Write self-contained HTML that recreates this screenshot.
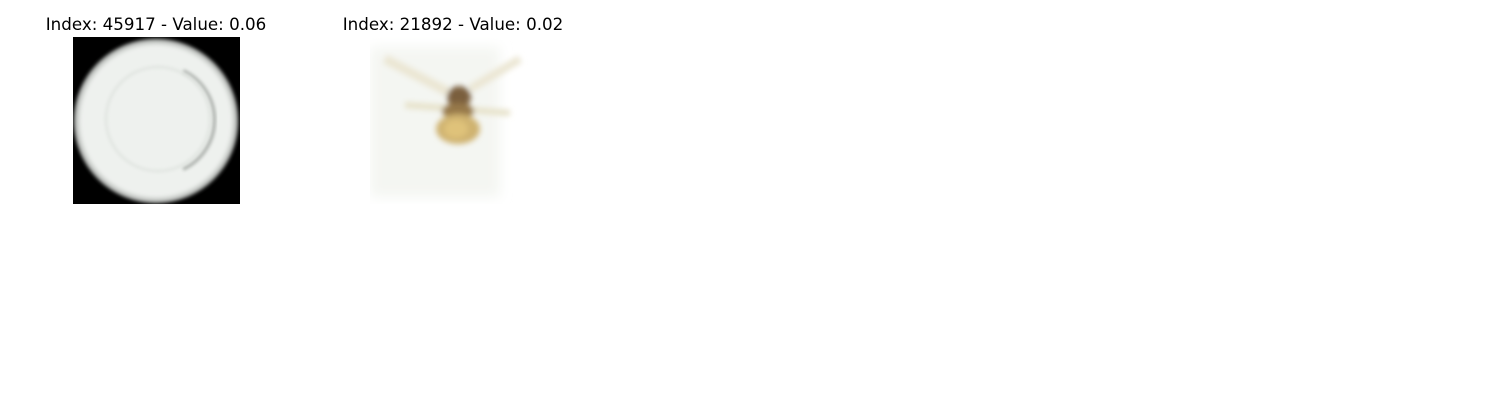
<!DOCTYPE html>
<html><head><meta charset="utf-8"><style>
html,body{margin:0;padding:0;background:#fff;width:1500px;height:400px;overflow:hidden}
.t{position:absolute;top:14px;font-family:"DejaVu Sans","Liberation Sans",sans-serif;font-size:16.7px;color:#000;white-space:nowrap;transform:translateX(-50%)}
svg{position:absolute}
</style></head><body>
<div class="t" style="left:156px">Index: 45917 - Value: 0.06</div>
<div class="t" style="left:453px">Index: 21892 - Value: 0.02</div>
<svg style="left:73px;top:37px" width="167" height="167" viewBox="0 0 167 167">
<defs><filter id="b" x="-10%" y="-10%" width="120%" height="120%"><feGaussianBlur stdDeviation="1.8"/></filter>
<filter id="b2"><feGaussianBlur stdDeviation="1.5"/></filter>
<radialGradient id="g" cx="0.5" cy="0.5" r="0.5"><stop offset="0.9" stop-color="#eef1ee"/><stop offset="0.97" stop-color="#b8bbb8"/><stop offset="1" stop-color="#000"/></radialGradient></defs>
<rect width="167" height="167" fill="#000"/>
<circle cx="83" cy="84" r="83" fill="url(#g)" filter="url(#b)"/>
<path d="M110 34 A54 54 0 0 1 110 132" stroke="#b3b7b3" stroke-width="4" fill="none" filter="url(#b2)"/>
<circle cx="85" cy="82" r="52" stroke="#e2e6e2" stroke-width="3" fill="none" filter="url(#b2)"/>
</svg>
<svg style="left:370px;top:37px" width="167" height="167" viewBox="0 0 167 167">
<defs><filter id="c"><feGaussianBlur stdDeviation="3"/></filter><filter id="c2"><feGaussianBlur stdDeviation="6"/></filter></defs>
<rect width="167" height="167" fill="#fff"/>
<rect x="0" y="10" width="130" height="150" fill="#f4f6f2" filter="url(#c2)"/>
<g filter="url(#c)">
<path d="M15 22 L78 55" stroke="#ebe6d3" stroke-width="9"/>
<path d="M150 22 L100 52" stroke="#ebe6d3" stroke-width="8"/>
<path d="M35 68 L140 76" stroke="#e6e1c8" stroke-width="6"/>
<ellipse cx="89" cy="60" rx="12" ry="11" fill="#7a5e3e"/>
<ellipse cx="88" cy="74" rx="16" ry="8" fill="#96784a"/>
<ellipse cx="88" cy="92" rx="22" ry="15" fill="#cfb270"/>
<ellipse cx="86" cy="92" rx="12" ry="9" fill="#dfc27a"/>
</g>
</svg>
</body></html>
